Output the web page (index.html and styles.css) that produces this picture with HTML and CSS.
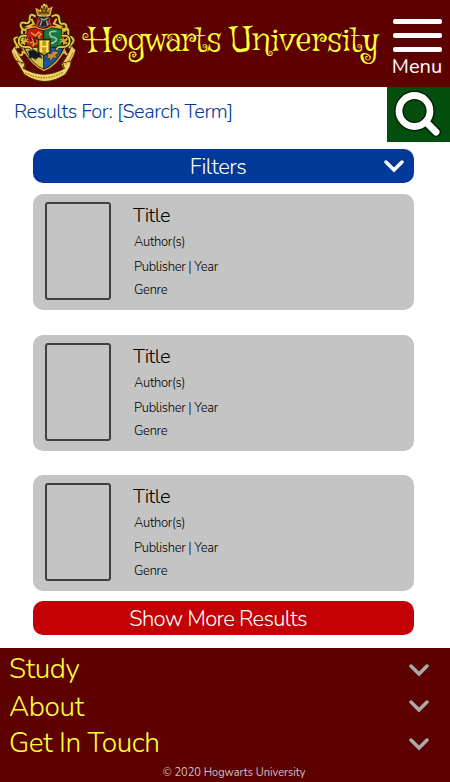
FILE: index.html
```html
<!DOCTYPE html>
<html lang="en">
<head>
<meta charset="utf-8">
<meta name="viewport" content="width=device-width, initial-scale=1">
<title>Hogwarts University</title>
<link rel="stylesheet" href="styles.css">
</head>
<body>
<header class="header">
  <svg class="crest" viewBox="30 9 200 238" preserveAspectRatio="none" aria-hidden="true">
    <!-- mantling -->
    <g fill="none" stroke="#282008" stroke-width="12">
      <path d="M107 50q-19-13-18 5t-13 14q-17-4-14 9t18 11M79 91q-19-7-12 13t-11 9q-20-3-9 17t8 8q-18 8-3 22t15-1M154 50q22-12 23 7t11 14q13 1 10 15t-20-1M184 91q22-13 20 7t8 13q14 9 3 20t-7 11q14 10 1 19t-18-10"/>
    </g>
    <g fill="none" stroke="#e5c238" stroke-width="6">
      <path d="M107 50q-19-13-18 5t-13 14q-17-4-14 9t18 11M79 91q-19-7-12 13t-11 9q-20-3-9 17t8 8q-18 8-3 22t15-1M154 50q22-12 23 7t11 14q13 1 10 15t-20-1M184 91q22-13 20 7t8 13q14 9 3 20t-7 11q14 10 1 19t-18-10"/>
      <path d="M94 57l7 15-19 8 15 3M169 56l-8 15 20 9-16 3M57 117l17 11-20 5 19 15M205 114l-18 13 21 6-21 14M65 155l17 7-4-19M197 155l-17 7 5-20"/>
    </g>
    <!-- shield -->
    <path d="M78 87 L105 80 Q131 98 154 80 L187 86 Q188 125 193 148 Q170 197 131 212 Q96 198 70 149 Q76 125 78 87Z" fill="#171711" stroke="#d3b52b" stroke-width="4"/>
    <path d="M82 90 L106 84 L128 93 V141 H79Z" fill="#c81519"/>
    <path d="M132 93 L155 84 L183 90 L185 141 H132Z" fill="#127a3c"/>
    <path d="M76 144 H129 V207 Q96 192 76 149Z" fill="#d8c34c"/>
    <path d="M132 144 H188 Q171 190 132 207Z" fill="#1759ac"/>
    <path d="M92 98 l14 10 9-11 8 6-9 8 7 7-10 5 5 9-9-3-8 8 3-14-9-8M90 130l11-5" fill="none" stroke="#e2ae21" stroke-width="4"/>
    <path d="M100 112l6 18M113 111l-7 7M89 112l5 10" stroke="#2e2510" stroke-width="5"/>
    <path d="M169 95 q-23-3-20 8 t13 9q14 7 0 15t-17-1" fill="none" stroke="#a9b7a2" stroke-width="5"/>
    <!-- side scrolls overlapping the shield -->
    <g fill="none">
      <path d="M80 108q-24-4-24 15t22 19q14-4 17 8M184 108q24-4 24 15t-22 19q-14-4-17 8" stroke="#282008" stroke-width="10"/>
      <path d="M80 108q-24-4-24 15t22 19q14-4 17 8M184 108q24-4 24 15t-22 19q-14-4-17 8" stroke="#edcf45" stroke-width="5"/>
      <path d="M64 118l22 10M66 130l17-13M200 118l-22 10M198 130l-17-13" stroke="#d5ac2b" stroke-width="4"/>
    </g>
    <path d="M83 153l18-4 13 9 11-4-4 10 7 12-13-3-9 7-10-6-11 4 2-13z" fill="#15191a" stroke="#777a63" stroke-width="2"/>
    <path d="M139 157l12 6 9-10 17 3-11 11 7 10-14-3-9 14-2-13-10 4 5-10z" fill="#bd8f32" stroke="#1a2424" stroke-width="2"/>
    <path d="M114 119h36v37l-18 12-18-12z" fill="#c89521" stroke="#292510" stroke-width="4"/>
    <path d="M119 125h9M123 126v28M119 155h9M123 140h18M137 125h9M141 126v28M137 155h9" fill="none" stroke="#fff062" stroke-width="5"/>
    <!-- helmet and crown -->
    <path d="M110 77l5-25 9-6 17 1 8 10-4 18-17 8z" fill="#24282a" stroke="#696963" stroke-width="3"/>
    <path d="M121 56l10 4 12-6M125 62l-5 15M139 62l4 14" fill="none" stroke="#a6a69b" stroke-width="4"/>
    <path d="M107 79l12-19M154 81l-9-20" stroke="#d8292b" stroke-width="5"/>
    <path d="M113 46l-5-20 13 7 4-15 8 7 6-10 6 13 10-6-6 24q-18 5-36 0z" fill="#a57b1f" stroke="#e8c941" stroke-width="3"/>
    <path d="M116 39h30M123 24l5 12M141 22l-5 14M132 10v20" stroke="#48310b" stroke-width="4"/>
    <circle cx="132" cy="15" r="4" fill="#f6df5b"/>
    <!-- motto ribbon -->
    <path d="M34 154l9-15 6 12q12 25 27 42l-4 17q-27-22-38-56zM226 151l-12-13-7 17q-13 27-24 38l7 16q27-24 36-58z" fill="#efcc68" stroke="#392907" stroke-width="2"/>
    <path d="M49 184l26 7-5 15q62 35 122 0l-5-16 26-6-4 18-13 22q-62 43-124 0z" fill="#f1d263" stroke="#442e08" stroke-width="3"/>
    <path d="M75 219q56 31 112-1" fill="none" stroke="#a97d28" stroke-width="4" stroke-dasharray="5 3"/>
    <path d="M43 161q9 21 23 34M218 159q-8 21-24 36" fill="none" stroke="#ba8c35" stroke-width="3"/>
  </svg>
  <h1 class="brand"><span class="first">Hogwarts</span> <span class="second">University</span></h1>
  <button class="menu"><i></i><i></i><i></i><span>Menu</span></button>
</header>
<main>
  <div class="search-row">
    <h2 class="results-for">Results For: [Search Term]</h2>
    <button class="search" aria-label="Search">
      <svg viewBox="0 0 63 55"><g fill="none" stroke-linecap="round"><path d="M40 36L49 45" stroke="#001c04" stroke-width="10"/><circle cx="27.5" cy="24" r="15.5" stroke="#001c04" stroke-width="9.5"/><path d="M39 35L49 45" stroke="#fff" stroke-width="7"/><circle cx="27.5" cy="24" r="15.5" stroke="#fff" stroke-width="6.8"/></g></svg>
    </button>
  </div>
  <div class="content">
    <button class="bar filters"><span>Filters</span><svg class="chevron" viewBox="0 0 20 13"><path d="M2 2L10 10L18 2"/></svg></button>
    <article class="card"><div class="cover"></div><div class="info"><h3>Title</h3><p class="author">Author(s)</p><p class="publisher">Publisher | Year</p><p class="genre">Genre</p></div></article>
    <article class="card"><div class="cover"></div><div class="info"><h3>Title</h3><p class="author">Author(s)</p><p class="publisher">Publisher | Year</p><p class="genre">Genre</p></div></article>
    <article class="card"><div class="cover"></div><div class="info"><h3>Title</h3><p class="author">Author(s)</p><p class="publisher">Publisher | Year</p><p class="genre">Genre</p></div></article>
    <button class="bar more"><span>Show More Results</span></button>
  </div>
</main>
<footer class="footer">
  <div class="link study"><span>Study</span><svg class="chevron" viewBox="0 0 20 13"><path d="M2 2L10 10L18 2"/></svg></div>
  <div class="link about"><span>About</span><svg class="chevron" viewBox="0 0 20 13"><path d="M2 2L10 10L18 2"/></svg></div>
  <div class="link touch"><span>Get In Touch</span><svg class="chevron" viewBox="0 0 20 13"><path d="M2 2L10 10L18 2"/></svg></div>
  <p class="copyright">© 2020 Hogwarts University</p>
</footer>
</body>
</html>
```
FILE: styles.css
```css
* { box-sizing: border-box; }
body { margin: 0; width: 450px; height: 782px; background: #fff; font-family: Nunito, Lato, sans-serif; font-weight: 300; overflow: hidden; }
h1, h2, h3, p { margin: 0; font-weight: 300; white-space: nowrap; }
button { border: 0; padding: 0; margin: 0; font: inherit; background: none; }
svg { display: block; }
.header { height: 87px; background: #5d0000; display: flex; }
.crest { width: 67px; height: 79px; margin: 3px 0 0 10px; flex: none; }
.brand { width: 292px; margin: 18px 0 0 10px; flex: none; font: 400 35px/46px Griffy, "Liberation Serif", serif; color: #ffff35; word-spacing: -3px; }
.first { letter-spacing: -0.45px; }
.second { letter-spacing: 0.3px; }
.menu { width: 50px; margin: 19px 0 0 13px; color: #fff; display: flex; flex-direction: column; align-items: center; flex: none; }
.menu i { width: 49px; height: 5px; border-radius: 2px; background: #fff; margin-bottom: 9px; flex: none; }
.menu span { font-size: 20px; line-height: 24px; margin-top: -6px; font-weight: 400; }
.search-row { height: 55px; display: flex; justify-content: space-between; }
.results-for { font-size: 20px; line-height: 24px; letter-spacing: -0.46px; color: #003997; margin: 13px 0 0 14px; }
.search { width: 63px; height: 55px; background: #034d0d; }
.content { width: 381px; margin: 7px 0 0 33px; display: flex; flex-direction: column; }
.bar { height: 34px; border-radius: 10px; color: #fff; font-size: 22px; line-height: 36px; letter-spacing: -0.7px; position: relative; }
.filters { background: #003997; margin-bottom: 11px; padding-right: 11px; letter-spacing: -0.5px; }
.filters .chevron { position: absolute; right: 10px; top: 11px; }
.chevron { width: 20px; height: 13px; fill: none; stroke: currentColor; stroke-width: 3.5; stroke-linecap: round; }
.card { height: 116px; border-radius: 10px; background: #c4c4c4; padding: 8px 12px; margin-bottom: 25px; display: flex; gap: 22px; color: #000; }
.card:nth-of-type(2) { margin-bottom: 24px; }
.card:nth-of-type(3) { margin-bottom: 10px; }
.cover { width: 66px; height: 98px; border: 2px solid #404040; border-radius: 3px; }
.info { font-size: 13px; line-height: 16px; letter-spacing: -0.3px; }
.info h3 { font-size: 20px; line-height: 24px; margin-top: 2px; letter-spacing: -0.5px; }
.info p { padding-left: 1px; }
.author { margin-top: 6px; }
.publisher { margin-top: 9px; }
.genre { margin-top: 7px; }
.more { background: #c30003; padding-right: 11px; }
.footer { height: 134px; margin-top: 13px; padding: 3px 21px 0 9px; background: #5d0000; color: #ffff35; }
.link { display: flex; justify-content: space-between; align-items: center; height: 37px; font-size: 28px; line-height: 37px; letter-spacing: -0.35px; }
.link .chevron { color: #aaa; }
.study .chevron, .touch .chevron { margin-top: 2px; }
.about span { position: relative; top: 1px; }
.copyright { font-size: 11px; line-height: 14px; font-weight: 400; color: #c4c4c4; text-align: center; margin-top: 4px; padding-left: 30px; }
```
